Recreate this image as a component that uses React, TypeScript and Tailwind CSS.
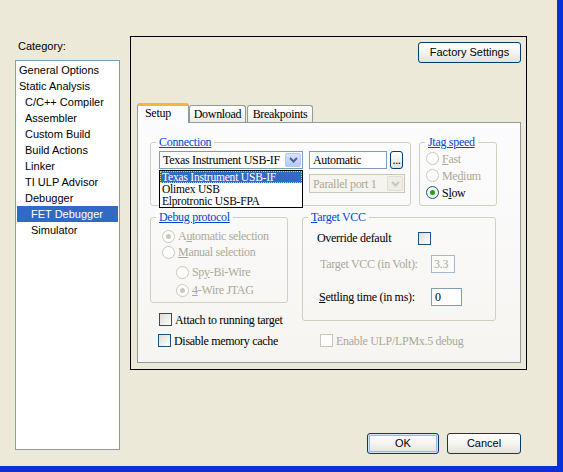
import React from "react";

const SERIF = "font-['Liberation_Serif',serif] text-[12px] tracking-[-0.3px]";
const SANS = "font-['Liberation_Sans',Arial,sans-serif] text-[11px]";

const categories = [
  { name: "General Options", level: 0 },
  { name: "Static Analysis", level: 0 },
  { name: "C/C++ Compiler", level: 1 },
  { name: "Assembler", level: 1 },
  { name: "Custom Build", level: 1 },
  { name: "Build Actions", level: 1 },
  { name: "Linker", level: 1 },
  { name: "TI ULP Advisor", level: 1 },
  { name: "Debugger", level: 1 },
  { name: "FET Debugger", level: 2, active: true },
  { name: "Simulator", level: 2 },
];

function Group({ label, className, children }: { label: React.ReactNode; className: string; children?: React.ReactNode }) {
  return (
    <div className={`relative rounded-[3px] border border-[#D0D0BF] ${className}`}>
      <span className="absolute left-[5px] -top-[8px] px-[3px] leading-[14px] text-[#0046D5] bg-[#FBFBFA]">{label}</span>
      {children}
    </div>
  );
}

function Radio({ label, checked, disabled, className = "" }: { label: React.ReactNode; checked?: boolean; disabled?: boolean; className?: string }) {
  return (
    <div className={`flex items-center ${className}`}>
      <svg width="13" height="13" viewBox="0 0 13 13" className="shrink-0">
        <circle cx="6.5" cy="6.5" r="6" fill={disabled ? "#FFFFFF" : "#F3F3EF"} stroke={disabled ? "#CAC8BB" : "#1C5180"} />
        {checked && <circle cx="6.5" cy="6.5" r="2.5" fill={disabled ? "#CAC8BB" : "#21A121"} />}
      </svg>
      <span className={`ml-[3px] leading-[14px] ${disabled ? "text-[#ACA899]" : "text-black"}`}>{label}</span>
    </div>
  );
}

function Check({ disabled }: { disabled?: boolean }) {
  return (
    <div
      className={`w-[13px] h-[13px] shrink-0 border ${
        disabled ? "border-[#CAC8BB] bg-white" : "border-[#1C5180] bg-linear-to-br from-[#DCDCD7] to-white"
      }`}
    />
  );
}

function Chevron({ color }: { color: string }) {
  return (
    <svg width="9" height="6" viewBox="0 0 9 6">
      <path d="M1 1 L4.5 4.5 L8 1" fill="none" stroke={color} strokeWidth="2" />
    </svg>
  );
}

function XpButton({ children, className = "", focused }: { children: React.ReactNode; className?: string; focused?: boolean }) {
  return (
    <div
      className={`flex items-center justify-center rounded-[3px] border border-[#003C74] bg-linear-to-b from-white via-[#F5F4EF] to-[#E3E1D8] ${SANS} ${
        focused ? "shadow-[inset_0_0_0_1px_#CEE7FF,inset_0_0_0_2px_#98B8EA]" : ""
      } ${className}`}
    >
      {children}
    </div>
  );
}

export default function App() {
  return (
    <div className="w-[563px] h-[472px] flex bg-[#ECE9D8] border-r-[6px] border-b-[6px] border-[#0831D9] overflow-hidden text-black">
      {/* category column */}
      <div className={`ml-[15px] w-[105px] pt-[39px] ${SANS}`}>
        <div className="leading-[14px] pl-[3px]">Category:</div>
        <div className="mt-[7px] h-[390px] border border-[#7F9DB9] bg-white p-px">
          {categories.map((c) => (
            <div
              key={c.name}
              className={`h-[16px] leading-[16px] ${c.active ? "bg-[#316AC5] text-white" : ""} ${
                c.level === 0 ? "pl-[2px]" : c.level === 1 ? "pl-[8px]" : "pl-[14px]"
              }`}
            >
              {c.name}
            </div>
          ))}
        </div>
      </div>

      {/* right side */}
      <div className="ml-[10px] w-[397px] flex flex-col">
        <div className="mt-[36px] h-[334px] border border-black flex flex-col">
          <XpButton className="ml-[287px] mt-[5px] w-[103px] h-[21px]">Factory Settings</XpButton>

          <div className={`ml-[6px] mt-[40px] ${SERIF}`}>
            {/* tabs */}
            <div className="flex items-start h-[19px]">
              <div className="relative z-10 w-[52px] h-[20px] rounded-t-[3px] border-x border-[#919B9C] border-t-[3px] border-t-[#F9B43C] bg-[#FCFCFE] pl-[7px] leading-[15px]">
                Setup
              </div>
              <div className="mt-[2px] w-[57px] h-[17px] rounded-t-[3px] border border-b-0 border-[#919B9C] bg-linear-to-b from-white to-[#ECEBE6] flex items-center justify-center">
                Download
              </div>
              <div className="ml-px mt-[2px] w-[66px] h-[17px] rounded-t-[3px] border border-b-0 border-[#919B9C] bg-linear-to-b from-white to-[#ECEBE6] flex items-center justify-center">
                Breakpoints
              </div>
            </div>

            {/* panel */}
            <div className="w-[384px] h-[241px] border border-[#919B9C] bg-linear-to-b from-[#FCFCFE] to-[#F6F5F1] pl-[12px] pt-[19px]">
              <div className="flex items-start">
                <Group label={<u>Connection</u>} className="w-[261px] h-[64px]">
                  <div className="pl-[8px] pt-[8px] flex items-start">
                    <div className="relative w-[144px] h-[18px] border border-[#7F9DB9] bg-white flex items-center">
                      <span className="pl-[3px] flex-1 leading-[14px]">Texas Instrument USB-IF</span>
                      <div className="mr-px w-[16px] h-[14px] rounded-[2px] border border-[#B4C8F5] bg-linear-to-b from-[#D7E3FD] to-[#B4CAF8] flex items-center justify-center">
                        <Chevron color="#4D6185" />
                      </div>
                      <div className="absolute -left-px top-[18px] z-20 w-[144px] h-[38px] border border-black bg-white text-[11.5px] tracking-[-0.2px]">
                        <div className="h-[12px] leading-[10px] bg-[#316AC5] text-white border border-dotted border-[#E4C86A] pl-px">
                          Texas Instrument USB-IF
                        </div>
                        <div className="h-[12px] leading-[12px] pl-[2px]">Olimex USB</div>
                        <div className="h-[12px] leading-[12px] pl-[2px]">Elprotronic USB-FPA</div>
                      </div>
                    </div>
                    <div className="ml-[6px] flex flex-col">
                      <div className="flex items-start">
                        <div className="w-[78px] h-[18px] border border-[#7F9DB9] bg-white pl-[3px] leading-[16px]">Automatic</div>
                        <div className="ml-[3px] w-[13px] h-[18px] rounded-[3px] border border-[#003C74] bg-linear-to-b from-white to-[#E3E1D8] flex items-end justify-center leading-[12px] pb-[2px]">
                          ...
                        </div>
                      </div>
                      <div className="mt-[5px] w-[96px] h-[19px] border border-[#C9C7BA] bg-[#F5F4EE] flex items-center">
                        <span className="pl-[3px] flex-1 text-[#ACA899] leading-[14px]">Parallel port 1</span>
                        <div className="mr-px w-[16px] h-[15px] rounded-[2px] border border-[#E0DED3] bg-[#EEEDE6] flex items-center justify-center">
                          <Chevron color="#C9C7BA" />
                        </div>
                      </div>
                    </div>
                  </div>
                </Group>

                <Group label={<u>Jtag speed</u>} className="ml-[8px] w-[78px] h-[64px]">
                  <div className="pl-[6px] pt-[7px]">
                    <Radio disabled className="h-[17px]" label={<><u>F</u>ast</>} />
                    <Radio disabled className="h-[17px]" label={<>Me<u>d</u>ium</>} />
                    <Radio checked className="h-[17px]" label={<>S<u>l</u>ow</>} />
                  </div>
                </Group>
              </div>

              <div className="mt-[11px] flex items-start">
                <div className="flex flex-col">
                  <Group label={<u>Debug protocol</u>} className="w-[138px] h-[86px]">
                    <div className="pl-[11px] pt-[10px]">
                      <Radio disabled checked className="h-[16px]" label={<>A<u>u</u>tomatic selection</>} />
                      <Radio disabled className="h-[16px]" label={<><u>M</u>anual selection</>} />
                      <Radio disabled className="mt-[4px] ml-[14px] h-[16px]" label={<>Sp<u>y</u>-Bi-Wire</>} />
                      <Radio disabled checked className="mt-[2px] ml-[14px] h-[16px]" label={<><u>4</u>-Wire JTAG</>} />
                    </div>
                  </Group>
                  <div className="mt-[10px] pl-[9px] flex items-center h-[13px]">
                    <Check />
                    <span className="ml-[3px] leading-[14px]">Attach to running target</span>
                  </div>
                </div>

                <Group label={<><u>T</u>arget VCC</>} className="ml-[14px] w-[194px] h-[104px]">
                  <div className="pl-[14px] pt-[12px] flex items-center h-[28px]">
                    <span className="w-[101px] leading-[14px]">Override default</span>
                    <Check />
                  </div>
                  <div className="mt-[9px] pl-[17px] flex items-center h-[18px]">
                    <span className="w-[111px] leading-[14px] text-[#ACA899]">Target VCC (in Volt):</span>
                    <div className="w-[24px] h-[18px] border border-[#A5B7CC] bg-[#FBFBFA] pl-[2px] leading-[16px] text-[#ACA899]">3.3</div>
                  </div>
                  <div className="mt-[15px] pl-[16px] flex items-center h-[18px]">
                    <span className="w-[112px] leading-[14px]">
                      <u>S</u>ettling time (in ms):
                    </span>
                    <div className="w-[31px] h-[18px] border border-[#7F9DB9] bg-white pl-[3px] leading-[16px]">0</div>
                  </div>
                </Group>
              </div>

              <div className="mt-[8px] pl-[8px] flex items-center h-[13px]">
                <div className="w-[162px] flex items-center">
                  <Check />
                  <span className="ml-[3px] leading-[14px]">Disable memory cache</span>
                </div>
                <div className="flex items-center">
                  <Check disabled />
                  <span className="ml-[3px] leading-[14px] text-[#ACA899]">Enable ULP/LPMx.5 debug</span>
                </div>
              </div>
            </div>
          </div>
        </div>

        <div className="mt-[63px] pl-[237px] flex">
          <XpButton focused className="w-[72px] h-[21px]">OK</XpButton>
          <XpButton className="ml-[8px] w-[74px] h-[21px]">Cancel</XpButton>
        </div>
      </div>
    </div>
  );
}
